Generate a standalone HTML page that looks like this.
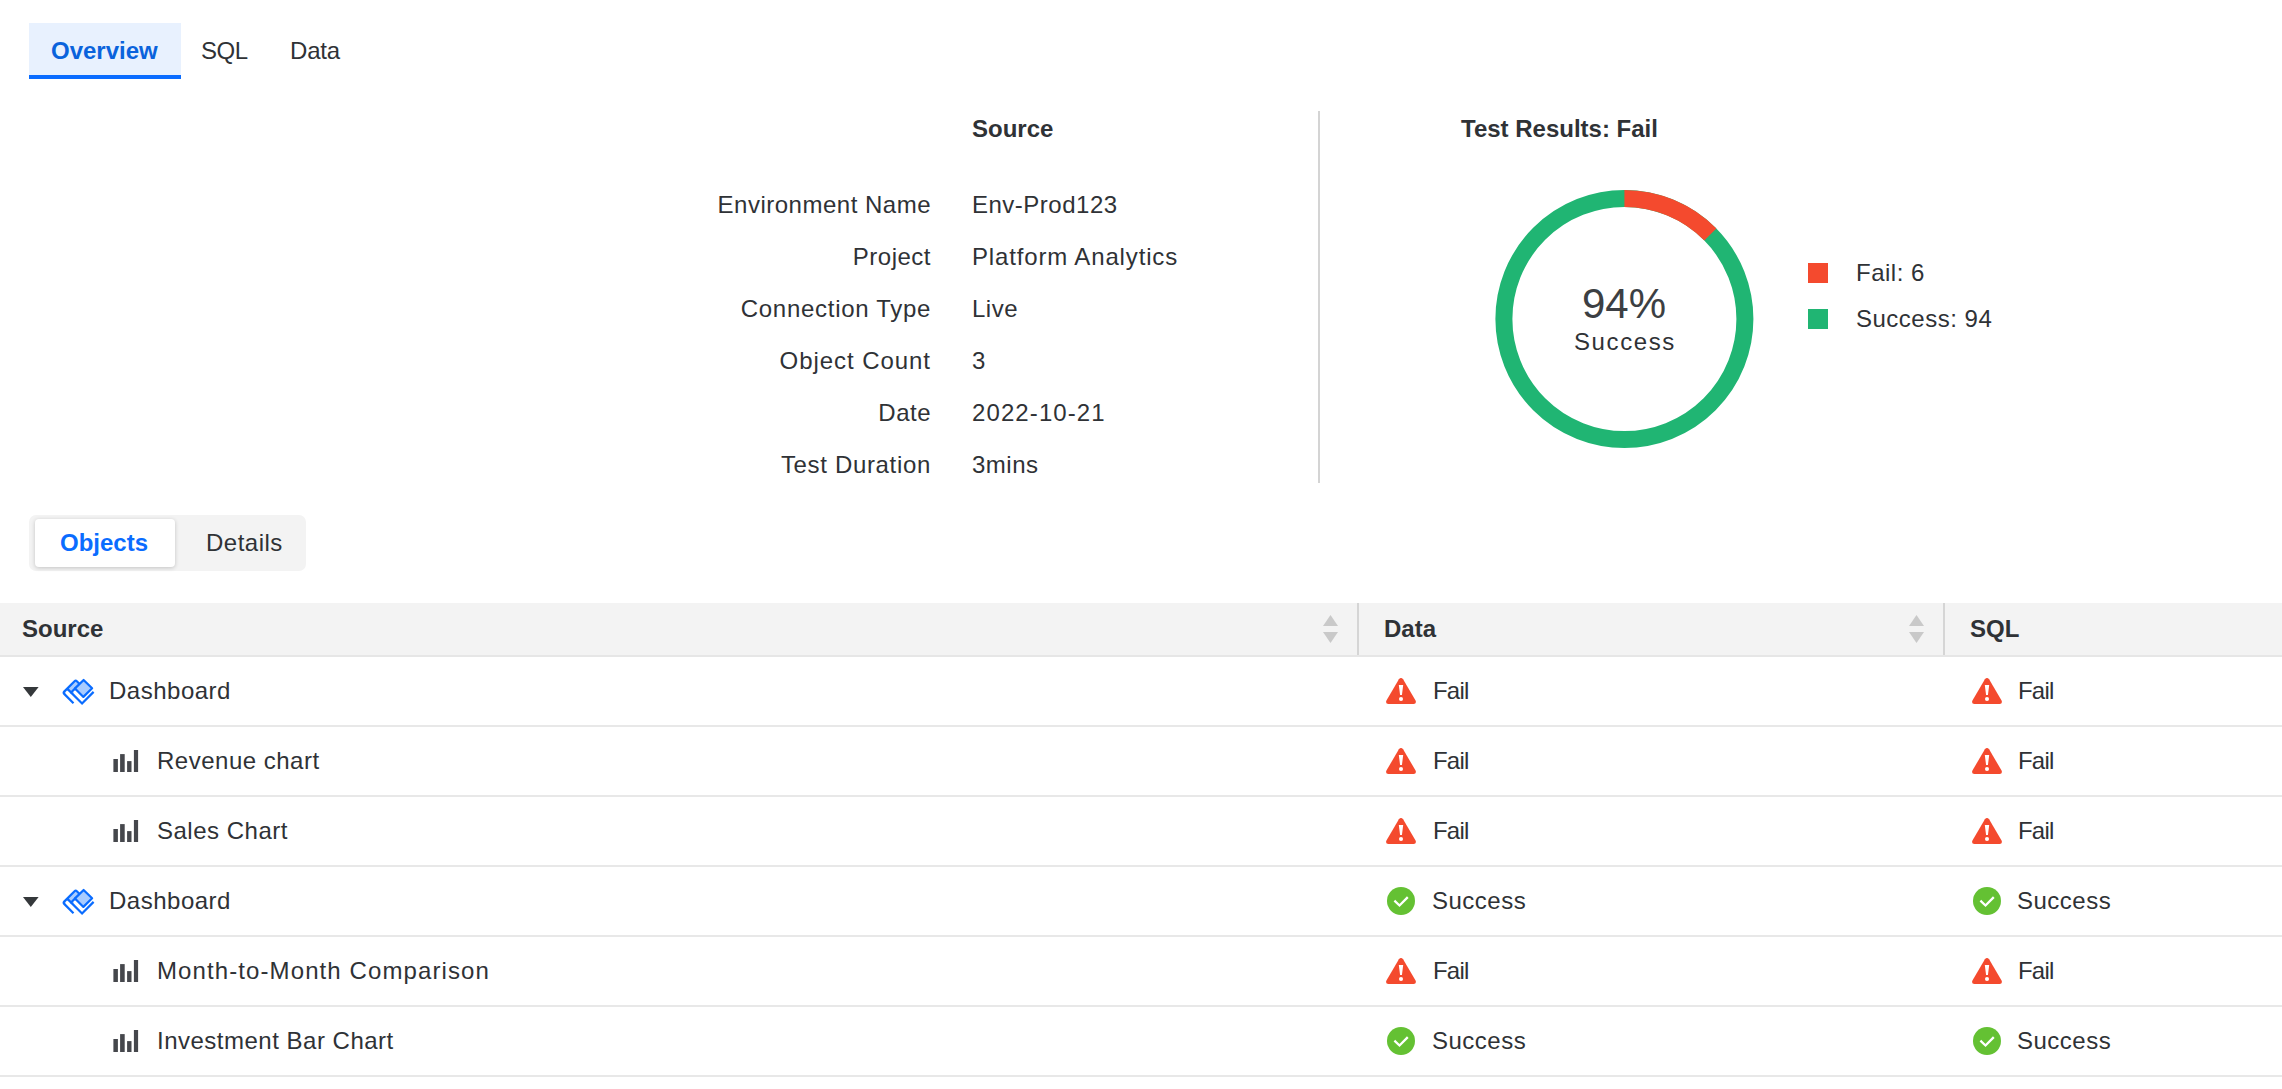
<!DOCTYPE html>
<html><head><meta charset="utf-8">
<style>
*{margin:0;padding:0;box-sizing:border-box}
html,body{width:2282px;height:1089px;overflow:hidden;background:#fff}
body{position:relative;font-family:"Liberation Sans",sans-serif;color:#2f3236;font-size:24px;line-height:24px}
.t{position:absolute;white-space:nowrap;letter-spacing:0.5px}
.b{font-weight:bold;letter-spacing:0}
.r{text-align:right}
.abs{position:absolute}
</style></head><body>

<!-- top tabs -->
<div class="abs" style="left:29px;top:23px;width:152px;height:52px;background:#e8f1fe"></div>
<div class="abs" style="left:29px;top:75px;width:152px;height:4px;background:#0a6cff"></div>
<div class="t b" style="left:51px;top:39px;color:#0a63dc">Overview</div>
<div class="t" style="left:201px;top:39px;letter-spacing:-0.5px">SQL</div>
<div class="t" style="left:290px;top:39px;letter-spacing:-0.2px">Data</div>

<!-- source info -->
<div class="t b" style="left:972px;top:117px">Source</div>
<div class="t r" style="right:1351px;top:193px">Environment Name</div>
<div class="t" style="left:972px;top:193px">Env-Prod123</div>
<div class="t r" style="right:1351px;top:245px">Project</div>
<div class="t" style="left:972px;top:245px;letter-spacing:0.85px">Platform Analytics</div>
<div class="t r" style="right:1351px;top:297px;letter-spacing:0.72px;margin-right:-0.2px">Connection Type</div>
<div class="t" style="left:972px;top:297px">Live</div>
<div class="t r" style="right:1351px;top:349px;letter-spacing:0.95px">Object Count</div>
<div class="t" style="left:972px;top:349px">3</div>
<div class="t r" style="right:1351px;top:401px">Date</div>
<div class="t" style="left:972px;top:401px;letter-spacing:1.1px">2022-10-21</div>
<div class="t r" style="right:1351px;top:453px;letter-spacing:0.67px">Test Duration</div>
<div class="t" style="left:972px;top:453px">3mins</div>

<div class="abs" style="left:1318px;top:111px;width:2px;height:372px;background:#d4d4d4"></div>

<!-- test results -->
<div class="t b" style="left:1461px;top:117px">Test Results: Fail</div>
<svg class="abs" style="left:1494px;top:189px" width="260" height="260" viewBox="0 0 260 260">
  <circle cx="130.4" cy="130" r="120.5" fill="none" stroke="#20b573" stroke-width="17"/>
  <path d="M130.4 9.5 A120.5 120.5 0 0 1 216.34 45.54" fill="none" stroke="#f44a2e" stroke-width="17"/>
</svg>
<div class="t" style="left:1624px;top:283px;font-size:42px;line-height:42px;letter-spacing:0;color:#3c3f43;transform:translateX(-50%)">94%</div>
<div class="t" style="left:1574px;top:330px;letter-spacing:1.6px">Success</div>

<div class="abs" style="left:1808px;top:263px;width:20px;height:20px;background:#f44a2e"></div>
<div class="abs" style="left:1808px;top:309px;width:20px;height:20px;background:#20b573"></div>
<div class="t" style="left:1856px;top:261px">Fail: 6</div>
<div class="t" style="left:1856px;top:307px">Success: 94</div>

<!-- segmented -->
<div class="abs" style="left:29px;top:515px;width:277px;height:56px;background:#f3f3f3;border-radius:7px"></div>
<div class="abs" style="left:35px;top:519px;width:140px;height:48px;background:#fff;border-radius:4px;box-shadow:0 1px 4px rgba(0,0,0,0.2)"></div>
<div class="t b" style="left:60px;top:531px;color:#0a6cff">Objects</div>
<div class="t" style="left:206px;top:531px">Details</div>

<!-- table -->
<div class="abs" style="left:0;top:603px;width:2282px;height:52px;background:#f3f3f3"></div>
<div class="abs" style="left:0;top:655px;width:2282px;height:2px;background:#e6e6e6"></div>
<div class="abs" style="left:1357px;top:603px;width:2px;height:52px;background:#d5d5d5"></div>
<div class="abs" style="left:1943px;top:603px;width:2px;height:52px;background:#d5d5d5"></div>
<svg class="abs" style="left:1323px;top:615px" width="15" height="29" viewBox="0 0 15 29"><path d="M7.5 0 L15 11 L0 11 Z" fill="#c9c9c9"/><path d="M0 17 L15 17 L7.5 28 Z" fill="#c9c9c9"/></svg>
<svg class="abs" style="left:1909px;top:615px" width="15" height="29" viewBox="0 0 15 29"><path d="M7.5 0 L15 11 L0 11 Z" fill="#c9c9c9"/><path d="M0 17 L15 17 L7.5 28 Z" fill="#c9c9c9"/></svg>
<div class="t b" style="left:22px;top:617px">Source</div>
<div class="t b" style="left:1384px;top:617px">Data</div>
<div class="t b" style="left:1970px;top:617px">SQL</div>
<div class="abs" style="left:0;top:725px;width:2282px;height:2px;background:#e8e8e8"></div>
<svg class="abs" style="left:23px;top:687px" width="16" height="10" viewBox="0 0 16 10"><path d="M0 0 L15.6 0 L7.8 10 Z" fill="#35383b"/></svg>
<svg class="abs" style="left:60px;top:675px" width="38" height="33" viewBox="0 0 38 33"><path d="M7.2,13.6 L15.7,5.1 L19.55,8.95 L11.05,17.45 Z" fill="#a9ccff"/><path d="M23.6,5 L32.1,13.3 L23.4,21.9 L15,13.4 Z" fill="#a9ccff" stroke="#0a6cff" stroke-width="2.2" stroke-linejoin="round"/><path d="M13.5,28.2 L4.2,18.9 Q3.05,17.75 4.2,16.6 L14.55,6.25 Q15.7,5.1 16.85,6.25 L19.55,8.95" fill="none" stroke="#0a6cff" stroke-width="2.2" stroke-linejoin="round"/><path d="M7.2,13.6 L22.05,28.45 L33.6,16.9" fill="none" stroke="#0a6cff" stroke-width="2.2"/><path d="M11.05,17.45 L15,13.4" fill="none" stroke="#0a6cff" stroke-width="2.2" stroke-linecap="round"/><path class="fil" d="M7.20,15.16 L6.14,16.22 A1.5,1.5 0 0 1 8.26,16.22 Z M4.61,17.75 L5.67,16.69 A1.5,1.5 0 0 0 5.67,18.81 Z M12.61,17.45 L13.67,16.39 A1.5,1.5 0 0 0 13.67,18.51 Z M15.00,15.06 L13.94,16.12 A1.5,1.5 0 0 1 16.06,16.12 Z" fill="#0a6cff"/></svg>
<div class="t" style="left:109px;top:679px">Dashboard</div>
<svg class="abs" style="left:1386px;top:678px" width="30" height="26" viewBox="0 0 30 26"><path d="M12.9 1.2 Q15 -1.1 17.1 1.2 L29.7 22.8 Q30.6 25.9 27.6 26 L2.4 26 Q-0.6 25.9 0.3 22.8 Z" fill="#f44a2e"/><path d="M12.8 6.9 L17.2 6.9 L15.95 17 L14.05 17 Z" fill="#fff"/><circle cx="15" cy="21" r="2.05" fill="#fff"/></svg>
<div class="t" style="left:1433px;top:679px;letter-spacing:-0.8px">Fail</div>
<svg class="abs" style="left:1972px;top:678px" width="30" height="26" viewBox="0 0 30 26"><path d="M12.9 1.2 Q15 -1.1 17.1 1.2 L29.7 22.8 Q30.6 25.9 27.6 26 L2.4 26 Q-0.6 25.9 0.3 22.8 Z" fill="#f44a2e"/><path d="M12.8 6.9 L17.2 6.9 L15.95 17 L14.05 17 Z" fill="#fff"/><circle cx="15" cy="21" r="2.05" fill="#fff"/></svg>
<div class="t" style="left:2018px;top:679px;letter-spacing:-0.8px">Fail</div>
<div class="abs" style="left:0;top:795px;width:2282px;height:2px;background:#e8e8e8"></div>
<svg class="abs" style="left:113px;top:750px" width="26" height="23" viewBox="0 0 26 23"><rect x="0.4" y="9" width="4.5" height="13" fill="#45474c"/><rect x="7.1" y="4.1" width="4.6" height="17.9" fill="#45474c"/><rect x="14.1" y="11.1" width="4.4" height="10.9" fill="#45474c"/><rect x="20.9" y="0" width="4.2" height="22" fill="#45474c"/></svg>
<div class="t" style="left:157px;top:749px">Revenue chart</div>
<svg class="abs" style="left:1386px;top:748px" width="30" height="26" viewBox="0 0 30 26"><path d="M12.9 1.2 Q15 -1.1 17.1 1.2 L29.7 22.8 Q30.6 25.9 27.6 26 L2.4 26 Q-0.6 25.9 0.3 22.8 Z" fill="#f44a2e"/><path d="M12.8 6.9 L17.2 6.9 L15.95 17 L14.05 17 Z" fill="#fff"/><circle cx="15" cy="21" r="2.05" fill="#fff"/></svg>
<div class="t" style="left:1433px;top:749px;letter-spacing:-0.8px">Fail</div>
<svg class="abs" style="left:1972px;top:748px" width="30" height="26" viewBox="0 0 30 26"><path d="M12.9 1.2 Q15 -1.1 17.1 1.2 L29.7 22.8 Q30.6 25.9 27.6 26 L2.4 26 Q-0.6 25.9 0.3 22.8 Z" fill="#f44a2e"/><path d="M12.8 6.9 L17.2 6.9 L15.95 17 L14.05 17 Z" fill="#fff"/><circle cx="15" cy="21" r="2.05" fill="#fff"/></svg>
<div class="t" style="left:2018px;top:749px;letter-spacing:-0.8px">Fail</div>
<div class="abs" style="left:0;top:865px;width:2282px;height:2px;background:#e8e8e8"></div>
<svg class="abs" style="left:113px;top:820px" width="26" height="23" viewBox="0 0 26 23"><rect x="0.4" y="9" width="4.5" height="13" fill="#45474c"/><rect x="7.1" y="4.1" width="4.6" height="17.9" fill="#45474c"/><rect x="14.1" y="11.1" width="4.4" height="10.9" fill="#45474c"/><rect x="20.9" y="0" width="4.2" height="22" fill="#45474c"/></svg>
<div class="t" style="left:157px;top:819px">Sales Chart</div>
<svg class="abs" style="left:1386px;top:818px" width="30" height="26" viewBox="0 0 30 26"><path d="M12.9 1.2 Q15 -1.1 17.1 1.2 L29.7 22.8 Q30.6 25.9 27.6 26 L2.4 26 Q-0.6 25.9 0.3 22.8 Z" fill="#f44a2e"/><path d="M12.8 6.9 L17.2 6.9 L15.95 17 L14.05 17 Z" fill="#fff"/><circle cx="15" cy="21" r="2.05" fill="#fff"/></svg>
<div class="t" style="left:1433px;top:819px;letter-spacing:-0.8px">Fail</div>
<svg class="abs" style="left:1972px;top:818px" width="30" height="26" viewBox="0 0 30 26"><path d="M12.9 1.2 Q15 -1.1 17.1 1.2 L29.7 22.8 Q30.6 25.9 27.6 26 L2.4 26 Q-0.6 25.9 0.3 22.8 Z" fill="#f44a2e"/><path d="M12.8 6.9 L17.2 6.9 L15.95 17 L14.05 17 Z" fill="#fff"/><circle cx="15" cy="21" r="2.05" fill="#fff"/></svg>
<div class="t" style="left:2018px;top:819px;letter-spacing:-0.8px">Fail</div>
<div class="abs" style="left:0;top:935px;width:2282px;height:2px;background:#e8e8e8"></div>
<svg class="abs" style="left:23px;top:897px" width="16" height="10" viewBox="0 0 16 10"><path d="M0 0 L15.6 0 L7.8 10 Z" fill="#35383b"/></svg>
<svg class="abs" style="left:60px;top:885px" width="38" height="33" viewBox="0 0 38 33"><path d="M7.2,13.6 L15.7,5.1 L19.55,8.95 L11.05,17.45 Z" fill="#a9ccff"/><path d="M23.6,5 L32.1,13.3 L23.4,21.9 L15,13.4 Z" fill="#a9ccff" stroke="#0a6cff" stroke-width="2.2" stroke-linejoin="round"/><path d="M13.5,28.2 L4.2,18.9 Q3.05,17.75 4.2,16.6 L14.55,6.25 Q15.7,5.1 16.85,6.25 L19.55,8.95" fill="none" stroke="#0a6cff" stroke-width="2.2" stroke-linejoin="round"/><path d="M7.2,13.6 L22.05,28.45 L33.6,16.9" fill="none" stroke="#0a6cff" stroke-width="2.2"/><path d="M11.05,17.45 L15,13.4" fill="none" stroke="#0a6cff" stroke-width="2.2" stroke-linecap="round"/><path class="fil" d="M7.20,15.16 L6.14,16.22 A1.5,1.5 0 0 1 8.26,16.22 Z M4.61,17.75 L5.67,16.69 A1.5,1.5 0 0 0 5.67,18.81 Z M12.61,17.45 L13.67,16.39 A1.5,1.5 0 0 0 13.67,18.51 Z M15.00,15.06 L13.94,16.12 A1.5,1.5 0 0 1 16.06,16.12 Z" fill="#0a6cff"/></svg>
<div class="t" style="left:109px;top:889px">Dashboard</div>
<svg class="abs" style="left:1387px;top:887px" width="28" height="28" viewBox="0 0 28 28"><circle cx="14" cy="14" r="14" fill="#64c133"/><path d="M7.4 13.7 L12.5 18.5 L20.8 10.1" fill="none" stroke="#fff" stroke-width="2.3"/></svg>
<div class="t" style="left:1432px;top:889px">Success</div>
<svg class="abs" style="left:1973px;top:887px" width="28" height="28" viewBox="0 0 28 28"><circle cx="14" cy="14" r="14" fill="#64c133"/><path d="M7.4 13.7 L12.5 18.5 L20.8 10.1" fill="none" stroke="#fff" stroke-width="2.3"/></svg>
<div class="t" style="left:2017px;top:889px">Success</div>
<div class="abs" style="left:0;top:1005px;width:2282px;height:2px;background:#e8e8e8"></div>
<svg class="abs" style="left:113px;top:960px" width="26" height="23" viewBox="0 0 26 23"><rect x="0.4" y="9" width="4.5" height="13" fill="#45474c"/><rect x="7.1" y="4.1" width="4.6" height="17.9" fill="#45474c"/><rect x="14.1" y="11.1" width="4.4" height="10.9" fill="#45474c"/><rect x="20.9" y="0" width="4.2" height="22" fill="#45474c"/></svg>
<div class="t" style="left:157px;top:959px;letter-spacing:1.1px">Month-to-Month Comparison</div>
<svg class="abs" style="left:1386px;top:958px" width="30" height="26" viewBox="0 0 30 26"><path d="M12.9 1.2 Q15 -1.1 17.1 1.2 L29.7 22.8 Q30.6 25.9 27.6 26 L2.4 26 Q-0.6 25.9 0.3 22.8 Z" fill="#f44a2e"/><path d="M12.8 6.9 L17.2 6.9 L15.95 17 L14.05 17 Z" fill="#fff"/><circle cx="15" cy="21" r="2.05" fill="#fff"/></svg>
<div class="t" style="left:1433px;top:959px;letter-spacing:-0.8px">Fail</div>
<svg class="abs" style="left:1972px;top:958px" width="30" height="26" viewBox="0 0 30 26"><path d="M12.9 1.2 Q15 -1.1 17.1 1.2 L29.7 22.8 Q30.6 25.9 27.6 26 L2.4 26 Q-0.6 25.9 0.3 22.8 Z" fill="#f44a2e"/><path d="M12.8 6.9 L17.2 6.9 L15.95 17 L14.05 17 Z" fill="#fff"/><circle cx="15" cy="21" r="2.05" fill="#fff"/></svg>
<div class="t" style="left:2018px;top:959px;letter-spacing:-0.8px">Fail</div>
<div class="abs" style="left:0;top:1075px;width:2282px;height:2px;background:#e8e8e8"></div>
<svg class="abs" style="left:113px;top:1030px" width="26" height="23" viewBox="0 0 26 23"><rect x="0.4" y="9" width="4.5" height="13" fill="#45474c"/><rect x="7.1" y="4.1" width="4.6" height="17.9" fill="#45474c"/><rect x="14.1" y="11.1" width="4.4" height="10.9" fill="#45474c"/><rect x="20.9" y="0" width="4.2" height="22" fill="#45474c"/></svg>
<div class="t" style="left:157px;top:1029px">Investment Bar Chart</div>
<svg class="abs" style="left:1387px;top:1027px" width="28" height="28" viewBox="0 0 28 28"><circle cx="14" cy="14" r="14" fill="#64c133"/><path d="M7.4 13.7 L12.5 18.5 L20.8 10.1" fill="none" stroke="#fff" stroke-width="2.3"/></svg>
<div class="t" style="left:1432px;top:1029px">Success</div>
<svg class="abs" style="left:1973px;top:1027px" width="28" height="28" viewBox="0 0 28 28"><circle cx="14" cy="14" r="14" fill="#64c133"/><path d="M7.4 13.7 L12.5 18.5 L20.8 10.1" fill="none" stroke="#fff" stroke-width="2.3"/></svg>
<div class="t" style="left:2017px;top:1029px">Success</div>
</body></html>
